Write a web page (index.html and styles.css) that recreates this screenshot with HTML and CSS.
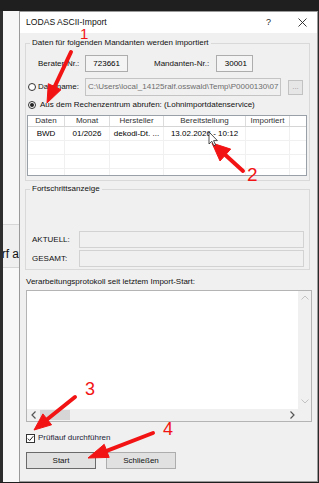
FILE: index.html
```html
<!DOCTYPE html>
<html lang="de">
<head>
<meta charset="utf-8">
<title>LODAS ASCII-Import</title>
<link rel="stylesheet" href="styles.css">
</head>
<body>
<div class="screen">
  <div class="topbar"></div>
  <div class="mid">
    <div class="bgleft">
      <div class="bg-a"></div>
      <div class="bg-b"><span>rf a</span></div>
      <div class="bg-c"></div>
    </div>
    <div class="win">
      <div class="titlebar">
        <span class="title">LODAS ASCII-Import</span>
        <span class="tb-help">?</span>
        <svg class="tb-close" width="9" height="9" viewBox="0 0 9 9"><path d="M0.5 0.5 L8.5 8.5 M8.5 0.5 L0.5 8.5" stroke="#222" stroke-width="0.9" fill="none"/></svg>
      </div>
      <div class="wbody">
        <fieldset class="group g1">
          <legend>Daten für folgenden Mandanten werden importiert</legend>
          <div class="row r-ids">
            <span class="lbl">Berater-Nr.:</span>
            <span class="field num f-berater">723661</span>
            <span class="lbl lbl-m">Mandanten-Nr.:</span>
            <span class="field num f-mand">30001</span>
          </div>
          <div class="row r-file">
            <span class="radio"></span>
            <span class="lbl">Dateiname:</span>
            <span class="field disabled f-file">C:\Users\local_14125ralf.osswald\Temp\P0000130\07</span>
            <span class="btn-dots">...</span>
          </div>
          <div class="row r-rz">
            <span class="radio checked"></span>
            <span class="rz-text">Aus dem Rechenzentrum abrufen: (Lohnimportdatenservice)</span>
          </div>
          <div class="list">
            <div class="lrow head">
              <span>Daten</span><span>Monat</span><span>Hersteller</span><span>Bereitstellung</span><span>Importiert</span><span class="rest"></span>
            </div>
            <div class="lrow">
              <span>BWD</span><span>01/2026</span><span>dekodi-Dt. ...</span><span>13.02.2026 - 10:12</span><span></span><span class="rest"></span>
            </div>
            <div class="lrow">
              <span></span><span></span><span></span><span></span><span></span><span class="rest"></span>
            </div>
            <div class="lrow">
              <span></span><span></span><span></span><span></span><span></span><span class="rest"></span>
            </div>
            <div class="lrow">
              <span></span><span></span><span></span><span></span><span></span><span class="rest"></span>
            </div>
          </div>
        </fieldset>

        <fieldset class="group g2">
          <legend>Fortschrittsanzeige</legend>
          <div class="prow first">
            <span class="lbl">AKTUELL:</span><span class="pfield"></span>
          </div>
          <div class="prow">
            <span class="lbl">GESAMT:</span><span class="pfield"></span>
          </div>
        </fieldset>

        <div class="log-label">Verarbeitungsprotokoll seit letztem Import-Start:</div>
        <div class="log">
          <div class="log-area"></div>
          <div class="vscroll">
            <svg width="8" height="5" viewBox="0 0 8 5"><path d="M0.5 4.5 L4 1 L7.5 4.5" stroke="#c2c2c2" stroke-width="1" fill="none"/></svg>
            <svg width="8" height="5" viewBox="0 0 8 5"><path d="M0.5 0.5 L4 4 L7.5 0.5" stroke="#c2c2c2" stroke-width="1" fill="none"/></svg>
          </div>
          <div class="hscroll">
            <svg class="harrow" width="5" height="8" viewBox="0 0 5 8"><path d="M4.5 0.5 L1 4 L4.5 7.5" stroke="#555" stroke-width="1.2" fill="none"/></svg>
            <span class="thumb"></span>
            <span class="hspace"></span>
            <svg class="harrow" width="5" height="8" viewBox="0 0 5 8"><path d="M0.5 0.5 L4 4 L0.5 7.5" stroke="#555" stroke-width="1.2" fill="none"/></svg>
          </div>
          <div class="corner"></div>
        </div>

        <div class="check-row">
          <span class="checkbox"><svg width="7" height="7" viewBox="0 0 7 7"><path d="M0.8 3.6 L2.7 5.5 L6.3 1.2" stroke="#222" stroke-width="1" fill="none"/></svg></span>
          <span class="check-text">Prüflauf durchführen</span>
        </div>

        <div class="buttons">
          <span class="btn default">Start</span>
          <span class="btn">Schließen</span>
        </div>
      </div>
    </div>
    <div class="bgright"></div>
  </div>
</div>

<svg class="annot" width="319" height="483" viewBox="0 0 319 483">
  <g fill="#f21414" stroke="#f21414">
    <line x1="71" y1="52" x2="54.7" y2="86.7" stroke-width="4" stroke-linecap="round"/>
    <polygon points="47,103 61,89.7 48.3,83.7" stroke-width="1"/>
    <line x1="243" y1="171" x2="225.4" y2="155.1" stroke-width="4" stroke-linecap="round"/>
    <polygon points="212,143 230.7,149.1 220,161" stroke-width="1"/>
    <line x1="75" y1="397" x2="47.3" y2="419.3" stroke-width="4" stroke-linecap="round"/>
    <polygon points="34,430 51.6,424.8 42.9,413.9" stroke-width="1"/>
    <line x1="153" y1="433" x2="106.7" y2="450.8" stroke-width="4" stroke-linecap="round"/>
    <polygon points="88,458 109.2,457.4 104.2,444.3" stroke-width="1"/>
  </g>
  <g class="nums" fill="#f21414">
    <text x="80" y="39" font-size="15">1</text>
    <text x="247" y="181" font-size="19">2</text>
    <text x="85" y="395" font-size="18">3</text>
    <text x="163" y="435" font-size="18">4</text>
  </g>
  <path d="M209 132 L209 144 L211.8 141.3 L213.8 145.8 L215.6 145 L213.6 140.6 L217.4 140.6 Z" fill="#fff" stroke="#222" stroke-width="0.8"/>
</svg>
</body>
</html>
```

FILE: styles.css
```css
* { box-sizing: border-box; }

html, body {
  margin: 0;
  padding: 0;
}

body {
  width: 319px;
  height: 483px;
  overflow: hidden;
  position: relative;
  background: #1e1e1e;
  font-family: "Liberation Sans", Arial, sans-serif;
  font-size: 8px;
  line-height: 10px;
  color: #000;
}

.topbar {
  height: 11px;
  background: #1f1f1f;
}

.mid {
  display: flex;
  height: 471px;
}

/* background page to the left of the dialog */
.bgleft {
  width: 19px;
  display: flex;
  flex-direction: column;
  border-left: 3px solid #2e2e2e;
}
.bg-a {
  height: 214px;
  background: #f6f6f6;
  border-bottom: 1px solid #d6d6d6;
}
.bg-b {
  height: 43px;
  background: #efefef;
  border-bottom: 1px solid #d6d6d6;
  display: flex;
  justify-content: flex-end;
  align-items: flex-end;
  overflow: hidden;
  white-space: nowrap;
  font-size: 12px;
  line-height: 14px;
  padding-bottom: 6px;
  color: #111;
}
.bg-c {
  flex: 1;
  background: #f8f8f8;
}
.bgright {
  flex: 1;
  background: #2a2a2a;
}

/* dialog window */
.win {
  width: 299px;
  border: 1px solid #9a9a9a;
  background: #f0f0f0;
  display: flex;
  flex-direction: column;
}

.titlebar {
  height: 21px;
  background: #fff;
  display: flex;
  align-items: center;
  padding-left: 6px;
  font-size: 8.6px;
  line-height: 9px;
  color: #111;
}
.title { flex: 1; }
.tb-help {
  font-size: 9px;
  margin-right: 27px;
  color: #222;
}
.tb-close { margin-right: 10px; }

.wbody {
  padding: 0 5px 0 5px;
  display: flex;
  flex-direction: column;
}

.group {
  margin: 0 2px 0 0;
  padding: 0;
  border: 1px solid #d9d9d9;
  min-width: 0;
}
.group legend {
  margin-left: 4px;
  padding: 0 2px;
  line-height: 10px;
  color: #111;
}
.g1 {
  margin-top: 5px;
  padding-bottom: 4px;
}
.g2 {
  margin-top: 3px;
  padding-bottom: 2px;
}

.row {
  display: flex;
  align-items: center;
}
.lbl {
  width: 47px;
  flex: none;
  white-space: nowrap;
  color: #111;
}
.r-ids {
  margin-top: 7px;
  height: 17px;
  padding-left: 12px;
}
.field {
  height: 17px;
  border: 1px solid #adadad;
  background: #f4f4f4;
  display: flex;
  align-items: center;
  white-space: nowrap;
  overflow: hidden;
}
.field.num {
  justify-content: flex-end;
  padding-right: 7px;
}
.f-berater { width: 43px; }
.lbl-m {
  margin-left: 26px;
  width: 62px;
}
.f-mand { width: 37px; padding-right: 5px !important; }

.r-file {
  margin-top: 6px;
  height: 18px;
}
.radio {
  width: 8px;
  height: 8px;
  border-radius: 50%;
  border: 1px solid #333;
  background: #fff;
  flex: none;
  margin-left: 2px;
  display: flex;
  align-items: center;
  justify-content: center;
}
.radio.checked::after {
  content: "";
  width: 4px;
  height: 4px;
  border-radius: 50%;
  background: #222;
}
.r-file .lbl { margin-left: 2px; }
.f-file {
  width: 196px;
  height: 18px;
  padding-left: 2px;
  border-color: #c4c4c4;
  background: #f0f0f0;
  color: #6d6d6d;
}
.btn-dots {
  width: 15px;
  height: 15px;
  margin-left: 7px;
  border: 1px solid #c2c2c2;
  background: #e6e6e6;
  color: #9a9a9a;
  display: flex;
  justify-content: center;
  align-items: flex-end;
  line-height: 10px;
  padding-bottom: 2px;
}

.r-rz {
  margin-top: 3px;
  height: 11px;
}
.rz-text {
  margin-left: 4px;
  white-space: nowrap;
  color: #111;
}

/* list view */
.list {
  margin: 5px 2px 0 1px;
  height: 61px;
  border: 1px solid #9aa0a8;
  background: #fff;
  overflow: hidden;
}
.lrow {
  display: grid;
  grid-template-columns: 37px 45px 54px 82px 44px 1fr;
  height: 14px;
  border-bottom: 1px solid #f0f0f0;
}
.lrow > span {
  display: flex;
  align-items: center;
  justify-content: center;
  white-space: nowrap;
  overflow: hidden;
  border-right: 1px solid #f0f0f0;
}
.lrow > span.rest { border-right: none; }
.lrow.head {
  height: 11px;
  border-bottom: 1px solid #d5d5d5;
  color: #333;
}
.lrow.head > span { border-right-color: #dcdcdc; }

/* progress */
.prow {
  display: flex;
  align-items: center;
  height: 17px;
  padding-left: 6px;
  padding-right: 5px;
  margin-top: 2px;
}
.prow.first { margin-top: 37px; }
.pfield {
  flex: 1;
  height: 17px;
  border: 1px solid #d2d2d2;
  background: #f0f0f0;
}

/* log */
.log-label {
  margin-top: 7px;
  margin-left: 1px;
  height: 10px;
  white-space: nowrap;
  color: #111;
}
.log {
  margin-top: 3px;
  margin-left: 1px;
  height: 132px;
  border: 1px solid #b4b4b4;
  display: grid;
  grid-template-columns: 1fr 13px;
  grid-template-rows: 1fr 12px;
}
.log-area { background: #fff; }
.vscroll {
  background: #f0f0f0;
  display: flex;
  flex-direction: column;
  justify-content: space-between;
  align-items: center;
  padding: 4px 0 5px;
}
.hscroll {
  background: #f0f0f0;
  display: flex;
  align-items: center;
  padding: 0 3px 0 4px;
}
.thumb {
  width: 30px;
  height: 10px;
  margin-left: 4px;
  background: #d6d6d6;
}
.hspace { flex: 1; }
.corner { background: #f0f0f0; }

/* checkbox */
.check-row {
  display: flex;
  align-items: center;
  margin-top: 10px;
  height: 12px;
}
.checkbox {
  width: 9px;
  height: 9px;
  margin-left: 1px;
  border: 1px solid #333;
  background: #fff;
  display: flex;
  align-items: center;
  justify-content: center;
}
.check-text {
  margin-left: 3px;
  color: #1d1d3a;
}

/* buttons */
.buttons {
  display: flex;
  margin-top: 8px;
  margin-bottom: 12px;
}
.btn {
  width: 70px;
  height: 17px;
  border: 1px solid #adadad;
  background: #e1e1e1;
  display: flex;
  align-items: center;
  justify-content: center;
  color: #111;
}
.btn.default {
  margin-left: 1px;
  border-color: #6a6a6a;
}
.btn + .btn { margin-left: 10px; }

/* annotation overlay */
.annot {
  position: absolute;
  left: 0;
  top: 0;
  pointer-events: none;
}
.nums text {
  font-family: "Liberation Sans", Arial, sans-serif;
}
```
